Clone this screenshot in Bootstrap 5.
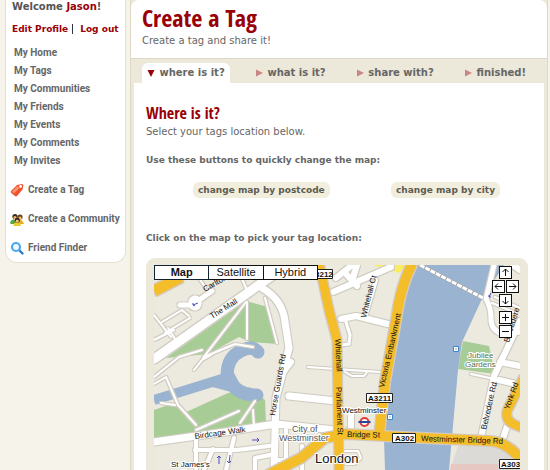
<!DOCTYPE html>
<html lang="en">
<head>
<meta charset="utf-8">
<meta name="viewport" content="width=device-width, initial-scale=1">
<title>Create a Tag</title>
<link href="https://cdn.jsdelivr.net/npm/bootstrap@5.3.0/dist/css/bootstrap.min.css" rel="stylesheet">
<style>
body{background:#f6f4ea;font:10px/16px "DejaVu Sans",Verdana,sans-serif;color:#666;overflow-x:hidden}
a{text-decoration:none}
.side{width:121px;margin-left:5px;background:#fff;border:1px solid #e6e1cf;border-top:0;border-radius:0 0 12px 12px;padding:0 0 5px 6px;white-space:nowrap}
.side,.steps,.pill,h1,h2{font-weight:700}
.hello{color:#555;line-height:14px}
.hello span,.account a,h1,h2{color:#990008}
.account{line-height:14px;margin-top:8px;font-size:9px}
.account a+a{border-left:1px solid #334;padding-left:7px;margin-left:4px}
.links{font-family:Roboto,Arial,sans-serif;font-size:10px}
.links a{color:#666}
.places{padding-left:2px;margin-top:8px;line-height:18px}
.tasks{margin-top:10px;line-height:19px;gap:10px}
.tasks svg{width:14px;height:14px;margin-right:4px;margin-left:-2px;flex-shrink:0}
.panel{margin-left:4px;margin-right:2px;background:#ece8da;border:1px solid #ddd8c4;border-top:0;border-bottom:0;min-width:0}
.heading{background:#fff;border-bottom:1px solid #ddd8c4;border-radius:8px 8px 0 0;padding:4px 11px 9px}
h1,h2{font-family:"Open Sans Condensed","Roboto Condensed",Roboto,sans-serif;margin:0}
h1{font-size:24px;line-height:28px}
h2{font-size:16px;line-height:22px}
.heading p{line-height:17px}
.steps{padding:4px 16px 0 11px}
.steps a{color:#666;height:20px;line-height:20px;padding:0 5px 0 5px;border-radius:6px 6px 0 0;white-space:nowrap}
.steps a.current{background:#fff}
.steps svg{width:8px;height:8px;margin-right:1px}
.content{background:#fff;margin:0 3px;padding:19px 16px 0 12px}
.label-line{font-size:9px;font-weight:700}
.pill{background:#f1eedd;border:0;border-radius:6px;color:#5d5c50;font-size:9px;line-height:16px;padding:0 5px}
.choices{margin:14px 28px 32px 47px}
.mapbox{background:#ece8da;border-radius:9px 9px 0 0;padding:7px 8px 0 8px;margin-top:12px}
.canvas{position:relative;overflow:hidden}
.canvas>svg{display:block;width:100%;height:auto}
.kinds{position:absolute;top:0;left:0;width:164px;font-family:"Liberation Sans",Arial,sans-serif}
.kinds button{flex:1;background:#fff;border:1px solid #111;color:#111;font-size:11px;line-height:13px;padding:0}
.kinds button+button{border-left:0}
.kinds .on{font-weight:700;border-color:#123}
.pad{position:absolute;top:1px;right:1px;width:27px;display:grid;grid-template-columns:1fr 1fr;gap:1px;justify-items:center}
.pad button{width:13px;height:13px;border:1px solid #111;background:#fff;padding:0;line-height:0}
.pad .wide{grid-column:1/3}
.pad .gap-above{margin-top:3px}
.pad svg{width:9px;height:9px;fill:none;stroke:#111}
.road{fill:none;stroke:#fff;stroke-linejoin:round;stroke-linecap:round}
.names{font-family:"Liberation Sans",Arial,sans-serif;font-size:8px;fill:#111}
.halo{stroke:#fff;stroke-width:2px;paint-order:stroke}
</style>
<script src="https://cdn.jsdelivr.net/npm/bootstrap@5.3.0/dist/js/bootstrap.bundle.min.js"></script>
</head>
<body>
<div class="d-flex align-items-start">
<aside class="side flex-shrink-0">
  <div class="hello">Welcome <span>Jason</span>!</div>
  <div class="account"><a href="#">Edit Profile</a><a href="#">Log out</a></div>
  <nav class="links" aria-label="Member">
    <ul class="places list-unstyled mb-0">
      <li><a href="#">My Home</a></li><li><a href="#">My Tags</a></li><li><a href="#">My Communities</a></li><li><a href="#">My Friends</a></li><li><a href="#">My Events</a></li><li><a href="#">My Comments</a></li><li><a href="#">My Invites</a></li>
    </ul>
    <ul class="tasks list-unstyled mb-0 d-flex flex-column">
      <li><a href="#" class="d-flex align-items-center"><svg viewBox="0 0 14 14"><path d="M1 8 7 2l5-1 1.500 1-1 4.500L7 13q-1 .8-2 0L1.300 10Q.3 9 1 8z" fill="#ef5030"/><path d="M2 8.500 7.500 3l2 2L4 10.500z" fill="#ff9369"/><circle cx="10.600" cy="3.500" r="1.400" fill="#fff"/></svg>Create a Tag</a></li>
      <li><a href="#" class="d-flex align-items-center"><svg viewBox="0 0 14 14"><path d="M0 11q1-4 4-3.500L6 12H1z" fill="#58a83a"/><path d="M8 12V8q4-1 6 4z" fill="#e6b01d"/><circle cx="5" cy="4.500" r="2.600" fill="#39291b"/><circle cx="10" cy="5" r="2.600" fill="#6c3c16"/><circle cx="5" cy="5.600" r="1.600" fill="#eeb763"/><circle cx="10" cy="6.200" r="1.600" fill="#f2c16e"/><path d="M3.500 14q0-4 3.500-4t4 4z" fill="#eacb2c"/><circle cx="7.200" cy="8.300" r="2.600" fill="#2b2118"/><circle cx="7.200" cy="9.200" r="1.600" fill="#f4be78"/></svg>Create a Community</a></li>
      <li><a href="#" class="d-flex align-items-center"><svg viewBox="0 0 14 14" fill="none"><path d="m9 9 3.500 3.500" stroke="#2877c9" stroke-width="2.400" stroke-linecap="round"/><circle cx="6" cy="6" r="4" stroke="#48a8ef" stroke-width="2.200" fill="#f2faff"/></svg>Friend Finder</a></li>
    </ul>
  </nav>
</aside>
<main class="panel flex-grow-1">
  <header class="heading"><h1>Create a Tag</h1><p class="mb-0">Create a tag and share it!</p></header>
  <nav class="steps d-flex justify-content-between" aria-label="Steps">
    <a class="current" href="#"><svg viewBox="0 0 8 8"><path d="M.5 1h7L4 8z" fill="#990008"/></svg> where is it?</a>
    <a href="#"><svg viewBox="0 0 8 8"><path d="M1 .5v7L8 4z" fill="#ca8585"/></svg> what is it?</a>
    <a href="#"><svg viewBox="0 0 8 8"><path d="M1 .5v7L8 4z" fill="#ca8585"/></svg> share with?</a>
    <a href="#"><svg viewBox="0 0 8 8"><path d="M1 .5v7L8 4z" fill="#ca8585"/></svg> finished!</a>
  </nav>
  <section class="content">
    <h2>Where is it?</h2>
    <p class="mb-0">Select your tags location below.</p>
    <p class="label-line mb-0 mt-2 pt-1">Use these buttons to quickly change the map:</p>
    <div class="choices d-flex justify-content-between"><button type="button" class="pill">change map by postcode</button><button type="button" class="pill">change map by city</button></div>
    <p class="label-line mb-0">Click on the map to pick your tag location:</p>
    <div class="mapbox"><div class="canvas">
<svg viewBox="154 265 366 205" role="img" aria-label="Map of Westminster, London">
<defs>
<filter id="casing" x="-5%" y="-5%" width="110%" height="110%"><feMorphology in="SourceAlpha" operator="dilate" radius="1" result="wide"/><feFlood flood-color="#d0ccc2"/><feComposite in2="wide" operator="in" result="edge"/><feMerge><feMergeNode in="edge"/><feMergeNode in="SourceGraphic"/></feMerge></filter>
<g id="lanes">
 <path d="M190 265 205 287M154 315l17 22M162 322l20-12 7 6M165 333l25-15M154 340l20-10M168 328l9 14" stroke-width="2"/>
 <path d="M180 305h12l20-14" stroke-width="5"/>
 <path d="M195 302v2" stroke-width="13"/>
 <path d="M236 265 246 288" stroke-width="2"/>
 <path d="M262 288Q283 300 285 322L289 348 282 375 276 398 274 470" stroke-width="7"/>
 <path d="M282 374 291 362" stroke-width="6"/>
 <path d="M154 359 280 270" stroke-width="9"/>
 <path d="M246 302 213 345 203 358M247 302v37M265 298l12 45M204 357 235 344 253 347M154 377l25-20 23-7M154 384l12-7 12 28 18 20M161 403l14 2M196 430 239 411M240 423l15-22M253 410l1 17M194 370l8-10 9-5" stroke-width="2"/>
 <path d="M154 442 225 432 276 424 345 431" stroke-width="7"/>
 <path d="M196 437v33M195 450h42l39-5M234 438l-8 32M213 449l-9 21M255 470v-12l20-4M286 430v40M302 446v24M276 460h12" stroke-width="4"/>
 <path d="M289 396 336 401" stroke-width="7"/>
 <path d="M308 367 336 369 380 372M345 372l7 4h12l3-4M340 451h18l3 7-7 6h-8" stroke-width="2"/>
 <path d="M351 413v18" stroke-width="6"/>
 <path d="M333 292 391 267M336 278l15-12M347 275l10 11M352 281 357 265M341 319l15-3 36 9" stroke-width="6"/>
 <path d="M365 317 376 280" stroke-width="4"/><path d="M346 322l4 13-1 9-8 1" stroke-width="3"/>
 <path d="M494 265 486 299Q491 307 491 319T503 334l17-2" stroke-width="5"/>
 <path d="M492 303l24 10M495 297l25 11M471 374l28 6" stroke-width="2"/>
 <path d="M513 265l7 5M520 321 505 353 494 376 481 438M499 380l21 5M500 362l20 4M508 424l-6 17" stroke-width="6"/>
</g>
<g id="mains"><path d="M154 291 181 277" stroke-width="11"/><path d="M319 263 329 310 337 340 339 470" stroke-width="9"/><path d="M413 262Q400 287 396 320L385 382 379 436" stroke-width="10"/><path d="M268 475 301 458 325 438 345 434 403 437 490 441Q508 442 522 461" stroke-width="10"/><path d="M524 377 507 411Q504 424 525 428" stroke-width="9"/></g>
</defs>
<path d="M154 265h366v205H154z" fill="#ece9df"/>
<path d="M166 358 246 301 268 307 278 344 250 342 239 337 208 354zM154 410 174 403 184 413 228 393 250 387 265 400 266 423 154 439zM463 341 489 346 495 374 458 369z" fill="#a7cc96"/>
<path d="M458 446h48l14 16v8h-70z" fill="#dcdad7"/><path d="M451 464h47v6h-48z" fill="#e7c7c1"/>
<path d="M154 400 193 388 225 378" fill="none" stroke="#9ab3d0" stroke-width="10"/><path d="M205 385 232 369 246 396z" fill="#9ab3d0"/>
<path d="M258 352Q252 345 241 351 227 357 227 376 236 396 257 395" fill="none" stroke="#9ab3d0" stroke-width="13" stroke-linecap="round"/>
<path d="M412 265h92L481 301 462 342 458 370 449 470h-64l-1-32L392 370z" fill="#9ab3d0"/>
<path d="M373 265h34l-8 8z" fill="#faec61"/>
<g class="road" filter="url(#casing)"><use href="#lanes"/></g>
<g fill="none" stroke="#f4bd2c" filter="url(#casing)"><use href="#mains"/></g>
<path d="M420 265 483 298" stroke="#a2a2a2" stroke-width="4"/><path d="M420 265 483 298" stroke="#fff" stroke-width="3" stroke-dasharray="5 1"/>
<g class="names">
 <text transform="translate(205 292) rotate(-30)">Carlton</text><text transform="translate(212 319) rotate(-32)">The Mall</text>
 <text transform="translate(275 416) rotate(-80)">Horse Guards Rd</text><text transform="translate(195 439) rotate(-8)">Birdcage Walk</text>
 <text transform="translate(366 318) rotate(-76)">Whitehall Ct</text><text transform="translate(335 339) rotate(87)">Whitehall</text><text transform="translate(336 387) rotate(88)">Parliament St</text>
 <text transform="translate(384 388) rotate(-77)">Victoria Embankment</text><text transform="translate(347 437) rotate(1)">Bridge St</text>
 <text transform="translate(421 441) rotate(2)">Westminster Bridge Rd</text><text transform="translate(486 430) rotate(-77)">Belvedere Rd</text><text transform="translate(509 410) rotate(-70)">York Rd</text><text transform="translate(509 343) rotate(-73)">Belvedere</text>
 <g class="halo"><text x="342" y="413">Westminster</text><text x="171" y="467">St James's</text><text x="182" y="475">Park</text><g fill="#555" font-size="9"><text x="292" y="432">City of</text><text x="279" y="441">Westminster</text></g><g fill="#526f4b"><text x="468" y="358">Jubilee</text><text x="465" y="367">Gardens</text></g><text x="315" y="463" font-size="13">London</text></g>
 <g fill="#fff" stroke="#222"><path d="M313.500 269.500h19v9h-19zM366.500 393.500h26v9h-26zM392.500 433.500h23v9h-23zM499.500 459.500h30v9h-30z"/></g>
 <g font-weight="700"><text x="315" y="277">3212</text><text x="368" y="401">A3211</text><text x="395" y="441">A302</text><text x="501" y="467">A3036</text></g>
</g>
<circle cx="364.500" cy="422" r="4" fill="#fff" stroke="#e33b3b" stroke-width="2"/><path d="M358.500 422h12" stroke="#2b4696" stroke-width="2"/>
<g fill="#fff" stroke="#3e87c7"><path d="M453.500 346.500h5v5h-5zM387.500 414.500h5v5h-5z"/></g><path d="M455.500 348.500h1v1h-1zM389.500 416.500h1v1h-1z" fill="#2b70b5"/>
<g fill="none" stroke="#4e4cc2"><path d="M252 440h7m-2-2 2 2-2 2M219 464v-8m-2 2 2-2 2 2M230 455l-1 8m-2-2 2 2 2-2M193 305l5-2m-3 3-2-1v-2M491 293l-2 4m0-2v2h2"/></g>
</svg>
<div class="kinds d-flex" role="group" aria-label="Map type"><button type="button" class="on">Map</button><button type="button">Satellite</button><button type="button">Hybrid</button></div>
<div class="pad"><button type="button" class="wide" aria-label="Up"><svg viewBox="0 0 9 9"><path d="M4.500 8V1M1.500 4l3-3 3 3"/></svg></button><button type="button" aria-label="Left"><svg viewBox="0 0 9 9"><path d="M8 4.500H1M4 1.500l-3 3 3 3"/></svg></button><button type="button" aria-label="Right"><svg viewBox="0 0 9 9"><path d="M1 4.500h7M5 1.500l3 3-3 3"/></svg></button><button type="button" class="wide" aria-label="Down"><svg viewBox="0 0 9 9"><path d="M4.500 1v7M1.500 5l3 3 3-3"/></svg></button><button type="button" class="wide gap-above" aria-label="Zoom in"><svg viewBox="0 0 9 9"><path d="M4.500 1v7M1 4.500h7"/></svg></button><button type="button" class="wide" aria-label="Zoom out"><svg viewBox="0 0 9 9"><path d="M1 4.500h7"/></svg></button></div>
    </div></div>
  </section>
</main>
</div>
</body>
</html>
